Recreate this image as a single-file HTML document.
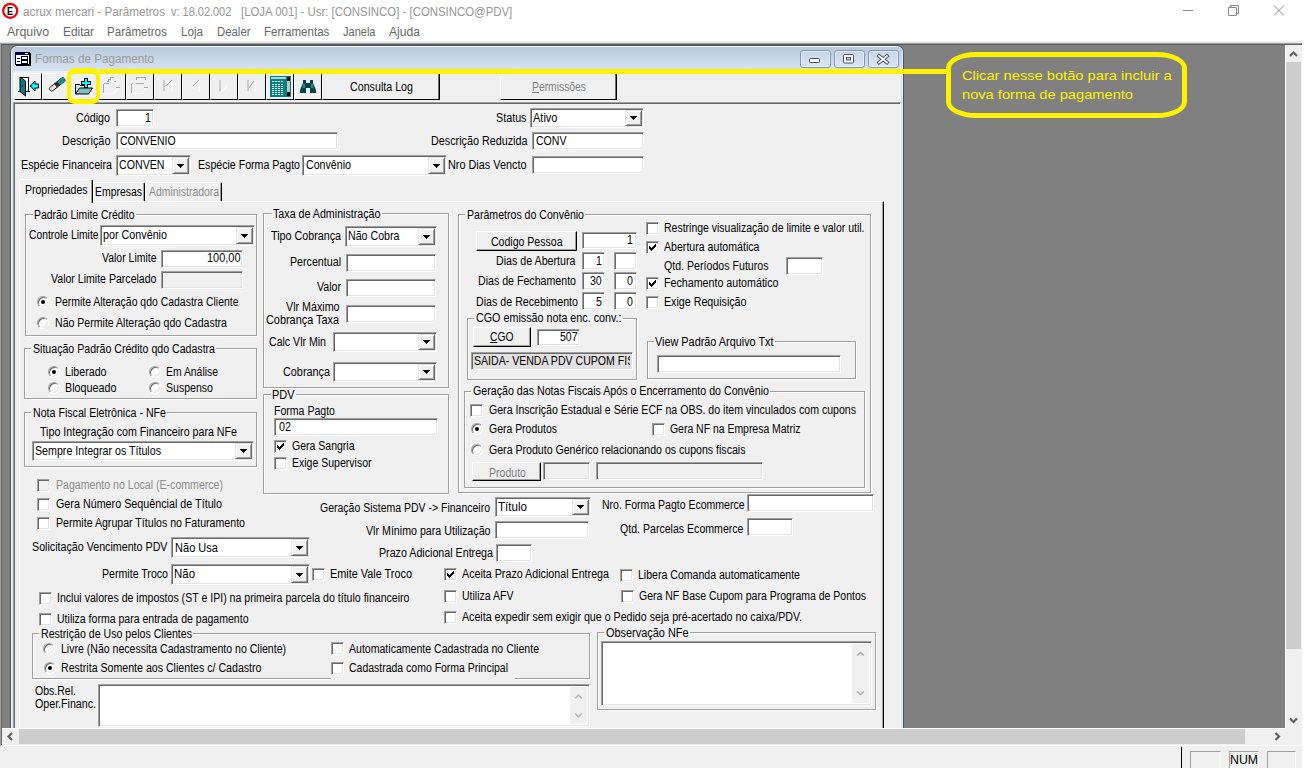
<!DOCTYPE html>
<html lang="pt-BR"><head><meta charset="utf-8"><title>acrux mercari - Parâmetros</title>
<style>

*{box-sizing:border-box}
html,body{margin:0;padding:0}
body{width:1304px;height:771px;position:relative;overflow:hidden;background:#fff;font-family:"Liberation Sans",sans-serif;font-size:12px;color:#000}
body div,body span.t,body svg.abs{position:absolute}
.t{white-space:nowrap;transform-origin:0 0;display:block}
.ed{background:#fff;border:1px solid;border-color:#a0a0a0 #fff #fff #a0a0a0;box-shadow:inset 1px 1px 0 #696969,inset -1px -1px 0 #e3e3e3}
.dd{right:1px;top:1px;bottom:1px;width:17px;background:#f0f0f0;border:1px solid;border-color:#e3e3e3 #696969 #696969 #e3e3e3;box-shadow:inset 1px 1px 0 #fff,inset -1px -1px 0 #a0a0a0}
.dd i{position:absolute;left:4px;top:50%;margin-top:-2px;width:7px;height:4px;background:linear-gradient(#000,#000) 0 0/7px 1px no-repeat,linear-gradient(#000,#000) 1px 1px/5px 1px no-repeat,linear-gradient(#000,#000) 2px 2px/3px 1px no-repeat,linear-gradient(#000,#000) 3px 3px/1px 1px no-repeat}
.cb{background:#fff;border:1px solid;border-color:#a0a0a0 #fff #fff #a0a0a0;box-shadow:inset 1px 1px 0 #696969,inset -1px -1px 0 #e3e3e3}
.cb .ck{position:absolute;left:2px;top:2px}
.rd{background:#fff;border-radius:50%;border:1px solid;border-color:#a0a0a0 #fff #fff #a0a0a0;box-shadow:inset 1px 1px 0 #696969,inset -1px -1px 0 #e3e3e3}
.rd b{position:absolute;left:3px;top:3px;width:4px;height:4px;background:#000;border-radius:50%}
.gb{border:1px solid #a0a0a0;box-shadow:1px 1px 0 #fff,inset 1px 1px 0 #fff}
.bt{background:#f0f0f0;border:1px solid;border-color:#fff #000 #000 #fff;box-shadow:inset -1px -1px 0 #a0a0a0}
.tab{background:#f0f0f0;border:1px solid;border-color:#fff #000 transparent #fff;border-bottom:0;border-radius:2px 2px 0 0;box-shadow:inset -1px 0 0 #a0a0a0}
.tab.sel{}
.tb{top:73px;width:28px;height:27px;background:#f0f0f0;border:1px solid;border-color:#fff #000 #000 #fff}
.tb svg{position:absolute;left:0;top:0}
.tsb{right:2px;top:2px;bottom:2px;width:17px;background:#f0f0f0}
.wb{top:50px;width:31px;height:18px;border:1px solid #8796b8;border-radius:3px;background:linear-gradient(#c6d6ea,#d9e5f3);box-shadow:inset 0 0 0 1px rgba(255,255,255,.45)}
.yl{background:#fff200}

</style></head>
<body>
<svg class="abs" style="left:1px;top:2px" width="18" height="18" viewBox="0 0 18 18"><circle cx="9.200" cy="8.800" r="7" fill="#fff" stroke="#f80008" stroke-width="2.2"/><text x="9.100" y="12.800" text-anchor="middle" font-family="Liberation Sans,sans-serif" font-weight="bold" font-size="11" fill="#000" textLength="6" lengthAdjust="spacingAndGlyphs">E</text></svg><span class="t" style="left:23.00px;top:4.67px;font-size:12.5px;line-height:15px;transform:scaleX(0.9377);color:#969696;">acrux mercari - Parâmetros</span><span class="t" style="left:170.50px;top:4.67px;font-size:12.5px;line-height:15px;transform:scaleX(0.8763);color:#969696;">v: 18.02.002</span><span class="t" style="left:240.50px;top:4.67px;font-size:12.5px;line-height:15px;transform:scaleX(0.9120);color:#969696;">[LOJA 001] - Usr: [CONSINCO] - [CONSINCO@PDV]</span><svg class="abs" style="left:1170px;top:0" width="134" height="24" viewBox="0 0 134 24" fill="none" stroke="#8a8a8a" stroke-width="1"><path d="M13 10.5h10"/><path d="M58.5 7.5h8v8h-8zM60.5 7.5v-2h8v8h-2"/><path d="M104 5.5l10 10M114 5.5l-10 10"/></svg><span class="t" style="left:6.90px;top:25.47px;font-size:12.5px;line-height:15px;transform:scaleX(0.9931);color:#666;">Arquivo</span><span class="t" style="left:62.50px;top:25.47px;font-size:12.5px;line-height:15px;transform:scaleX(0.9493);color:#666;">Editar</span><span class="t" style="left:107.20px;top:25.47px;font-size:12.5px;line-height:15px;transform:scaleX(0.9256);color:#666;">Parâmetros</span><span class="t" style="left:181.00px;top:25.47px;font-size:12.5px;line-height:15px;transform:scaleX(0.9306);color:#666;">Loja</span><span class="t" style="left:217.00px;top:25.47px;font-size:12.5px;line-height:15px;transform:scaleX(0.9096);color:#666;">Dealer</span><span class="t" style="left:264.20px;top:25.47px;font-size:12.5px;line-height:15px;transform:scaleX(0.9215);color:#666;">Ferramentas</span><span class="t" style="left:342.50px;top:25.47px;font-size:12.5px;line-height:15px;transform:scaleX(0.8821);color:#666;">Janela</span><span class="t" style="left:388.80px;top:25.47px;font-size:12.5px;line-height:15px;transform:scaleX(0.9661);color:#666;">Ajuda</span><div style="left:0;top:41px;width:1304px;height:2px;background:linear-gradient(#f6f6f6,#e2e2e2)"></div><div style="left:0;top:43px;width:1304px;height:1px;background:#a0a0a0"></div><div style="left:0;top:44px;width:1304px;height:1px;background:#5c5c5c"></div><div style="left:1px;top:45px;width:1284px;height:683px;background:#808080"></div><div style="left:10px;top:45px;width:894px;height:700px;border:1px solid #4d545e;border-bottom:0;border-radius:7px 7px 0 0;background:#d0dff2;box-shadow:inset 1px 1px 0 #f4f8fc,inset -1px 0 0 #e6eef8"></div><div style="left:12px;top:47px;width:890px;height:24px;border-radius:5px 5px 0 0;background:linear-gradient(#b9c9dc,#c9d7e7 50%,#d3e0f1 90%,#d0e0f6)"></div><svg class="abs" style="left:15px;top:52px" width="16" height="14" viewBox="0 0 16 14" shape-rendering="crispEdges"><rect x="0.5" y="0.5" width="14" height="12" fill="#fff" stroke="#000"/><rect x="1" y="1" width="13" height="2" fill="#000080"/><rect x="10" y="1" width="3" height="1" fill="#fff"/><path d="M2 6.500h3M2 9.500h3" stroke="#000" stroke-width="1"/><rect x="6.500" y="4.500" width="6" height="3" fill="#fff" stroke="#000"/><rect x="6.500" y="8.500" width="6" height="2.500" fill="#fff" stroke="#000"/><path d="M15.500 1v13M1 13.500h15" stroke="#000"/></svg><span class="t" style="left:34.80px;top:52.17px;font-size:12.5px;line-height:15px;transform:scaleX(0.9359);color:#9a9a9a;">Formas de Pagamento</span><div class="wb" style="left:799.5px"></div><div class="wb" style="left:833.5px"></div><div class="wb" style="left:867.5px"></div><svg class="abs" style="left:799px;top:50px" width="100" height="18" viewBox="0 0 100 18"><rect x="10.5" y="8.5" width="10" height="4" rx="1" fill="#fff" stroke="#4a4e5c"/><rect x="44.5" y="4.5" width="10" height="8.5" rx="1" fill="#fff" stroke="#4a4e5c"/><rect x="47.5" y="7.5" width="4" height="2.5" fill="#c9d6e8" stroke="#4a4e5c"/><path d="M80 6l8 6.500M88 6l-8 6.500" stroke="#4a4e5c" stroke-width="3.6" stroke-linecap="square"/><path d="M80 6l8 6.500M88 6l-8 6.500" stroke="#fff" stroke-width="1.7" stroke-linecap="square"/></svg><div style="left:13px;top:71px;width:888px;height:680px;background:#f0f0f0"></div><div class="tb" style="left:14px"><svg width="26" height="25" viewBox="0 0 26 25" shape-rendering="crispEdges"><rect x="5.5" y="3.5" width="8" height="14" fill="#fff" stroke="#000"/><path d="M5 3l5.500 4v15l-5.500-4.500z" fill="#008080" stroke="#000" stroke-width="1" shape-rendering="auto"/><rect x="7" y="11" width="1" height="2" fill="#000"/><path d="M3 17.500h3M13 17.500h2" stroke="#000"/><path d="M15.500 12l4.500-5v3h3.500v4h-3.500v3z" fill="#00ffff" stroke="#000" stroke-width="1" shape-rendering="auto"/><rect x="15" y="11" width="1" height="2" fill="#0000ff"/></svg></div><div class="tb" style="left:42px"><svg width="26" height="25" viewBox="0 0 26 25"><g transform="rotate(-38.500 14.200 10.400)"><rect x="5" y="8.200" width="18.400" height="4.400" rx="2" fill="#fff" stroke="#000" stroke-width="0.900"/><rect x="5.500" y="8.700" width="6" height="3.400" rx="1.500" fill="#dcdcdc"/><rect x="12" y="8.200" width="4.500" height="4.400" fill="#303030"/><rect x="16.500" y="8.200" width="6.500" height="4.400" fill="#109090"/></g><path d="M4 18.500h11" stroke="#fff" stroke-width="1"/></svg></div><div class="tb" style="left:70px"><svg width="26" height="25" viewBox="0 0 26 25" shape-rendering="crispEdges"><path d="M4.500 20v-9l1-1h3l1 1.500h4" fill="none" stroke="#000"/><path d="M5 11h3l1.500 1.500h5v3H7L5 19.500z" fill="#d4ecec"/><path d="M4.500 20h13l4-6h-13z" fill="#80c0c0" stroke="#000" shape-rendering="auto"/><path d="M13.500 4.500h3v3h3v3h-3v3h-3v-3h-3v-3h3z" fill="#00ffff" stroke="#000"/></svg></div><div class="tb" style="left:98px"><svg width="26" height="25" viewBox="0 0 26 25" shape-rendering="crispEdges" fill="none" stroke="#a8a8a8"><g transform="translate(-2.5,-1)"><path d="M6.500 20v-8l2-2h2M10 8.500h2v-2h2v-2h3M17 8.500h2M10 10.500h2M19 14.500h4" /><path d="M6 20.500h11l5-5.500" stroke="#fff" shape-rendering="auto"/></g></svg></div><div class="tb" style="left:126px"><svg width="26" height="25" viewBox="0 0 26 25" shape-rendering="crispEdges" fill="none" stroke="#a8a8a8"><g transform="translate(-2.5,-1)"><path d="M6.500 20v-8l2-2M11.500 7v-3h9v3M11 10.500h8M19 14.500h4"/><path d="M6 20.500h11l5-5.500" stroke="#fff" shape-rendering="auto"/></g></svg></div><div class="tb" style="left:154px"><svg width="26" height="25" viewBox="0 0 26 25" fill="none" stroke="#a8a8a8"><g transform="translate(-1.5,-1)"><path d="M10.500 7v11M18.500 7l-6 6" /><path d="M18.500 8v11" stroke="#fff"/></g></svg></div><div class="tb" style="left:182px"><svg width="26" height="25" viewBox="0 0 26 25" fill="none" stroke="#a8a8a8"><g transform="translate(-1.5,-1)"><path d="M17.500 7l-6 6"/><path d="M17.500 8v11" stroke="#fff"/></g></svg></div><div class="tb" style="left:210px"><svg width="26" height="25" viewBox="0 0 26 25" fill="none" stroke="#a8a8a8"><g transform="translate(-1.5,-1)"><path d="M10.500 7v11"/><path d="M11.500 19l6-6" stroke="#fff"/></g></svg></div><div class="tb" style="left:238px"><svg width="26" height="25" viewBox="0 0 26 25" fill="none" stroke="#a8a8a8"><g transform="translate(-1.5,-1)"><path d="M10.500 7v11M16.500 8l-5 7"/><path d="M17.500 7v11" stroke="#fff"/></g></svg></div><div class="tb" style="left:266px"><svg width="26" height="25" viewBox="0 0 26 25" shape-rendering="crispEdges"><rect x="3" y="2" width="21" height="21" fill="#008080"/><rect x="4" y="3" width="15" height="2" fill="#b0d8d8"/><path d="M5 7.5h12" stroke="#fff" stroke-dasharray="2 1"/><path d="M5 10.5h12" stroke="#fff" stroke-dasharray="2 1"/><path d="M5 12.5h12" stroke="#fff" stroke-dasharray="2 1"/><path d="M5 14.5h12" stroke="#fff" stroke-dasharray="2 1"/><path d="M5 16.5h12" stroke="#fff" stroke-dasharray="2 1"/><path d="M5 18.5h12" stroke="#fff" stroke-dasharray="2 1"/><path d="M5 20.5h12" stroke="#fff" stroke-dasharray="2 1"/><rect x="20" y="3" width="3" height="19" fill="#c0c0c0"/><rect x="20" y="3" width="3" height="4" fill="#000"/><rect x="20" y="18" width="3" height="4" fill="#000"/></svg></div><div class="tb" style="left:294px"><svg width="26" height="25" viewBox="0 0 26 25"><path d="M8 6h3v3h4V6h3v3l3 7v3h-6v-5h-4v5H5v-3l3-7z" fill="#004848"/><path d="M9 10v4M17 10v4" stroke="#7fbfbf" stroke-width="1"/></svg></div><div class="tb" style="left:322px;width:118px;box-shadow:inset -1px 0 0 #707070"></div><span class="t" style="left:349.50px;top:79.84px;font-size:12px;line-height:14px;transform:scaleX(0.8909);">Consulta Log</span><div class="tb" style="left:500px;width:117px;box-shadow:inset -1px 0 0 #707070"></div><span class="t" style="left:531.50px;top:79.84px;font-size:12px;line-height:14px;transform:scaleX(0.8614);color:#808080;"><u>P</u>ermissões</span><div style="left:13px;top:102px;width:888px;height:660px;background:#f0f0f0;border:1px solid;border-color:#a0a0a0 #fff #fff #a0a0a0;box-shadow:inset 1px 1px 0 #696969"></div>
<span class="t" style="left:75.50px;top:110.84px;font-size:12px;line-height:14px;transform:scaleX(0.8940);">Código</span>
<div class="ed" style="left:116px;top:109px;width:38px;height:18px;"></div>
<span class="t" style="left:144.62px;top:110.84px;font-size:12px;line-height:14px;transform:scaleX(0.8800);">1</span>
<span class="t" style="left:62.00px;top:134.34px;font-size:12px;line-height:14px;transform:scaleX(0.9089);">Descrição</span>
<div class="ed" style="left:116px;top:132px;width:222px;height:18px;"></div>
<span class="t" style="left:120.00px;top:133.84px;font-size:12px;line-height:14px;transform:scaleX(0.8670);">CONVENIO</span>
<span class="t" style="left:20.50px;top:158.34px;font-size:12px;line-height:14px;transform:scaleX(0.8916);">Espécie Financeira</span>
<div class="ed" style="left:116px;top:155px;width:75px;height:21px;"><div class="dd"><i></i></div></div>
<span class="t" style="left:119.00px;top:157.84px;font-size:12px;line-height:14px;transform:scaleX(0.8862);">CONVEN</span>
<span class="t" style="left:197.50px;top:157.84px;font-size:12px;line-height:14px;transform:scaleX(0.8840);">Espécie Forma Pagto</span>
<div class="ed" style="left:302px;top:155px;width:145px;height:21px;"><div class="dd"><i></i></div></div>
<span class="t" style="left:305.50px;top:157.84px;font-size:12px;line-height:14px;transform:scaleX(0.8875);">Convênio</span>
<span class="t" style="left:496.00px;top:110.84px;font-size:12px;line-height:14px;transform:scaleX(0.8962);">Status</span>
<div class="ed" style="left:530px;top:108px;width:114px;height:20px;"><div class="dd"><i></i></div></div>
<span class="t" style="left:533.00px;top:110.84px;font-size:12px;line-height:14px;transform:scaleX(0.9180);">Ativo</span>
<span class="t" style="left:431.00px;top:133.84px;font-size:12px;line-height:14px;transform:scaleX(0.8986);">Descrição Reduzida</span>
<div class="ed" style="left:532px;top:132px;width:112px;height:18px;"></div>
<span class="t" style="left:535.50px;top:133.84px;font-size:12px;line-height:14px;transform:scaleX(0.8797);">CONV</span>
<span class="t" style="left:448.00px;top:157.84px;font-size:12px;line-height:14px;transform:scaleX(0.9052);">Nro Dias Vencto</span>
<div class="ed" style="left:532px;top:156px;width:112px;height:18px;"></div>
<div class="" style="left:19px;top:201px;width:865px;height:539px;border-left:1px solid #fff;border-top:1px solid #fff;border-right:1px solid #000;box-shadow:inset -1px 0 0 #a0a0a0;"></div>
<div class="tab" style="left:93px;top:182px;width:52px;height:19px;"></div>
<div class="tab" style="left:145px;top:182px;width:77px;height:19px;"></div>
<div class="tab sel" style="left:19px;top:179px;width:74px;height:24px;"></div>
<span class="t" style="left:25.00px;top:182.84px;font-size:12px;line-height:14px;transform:scaleX(0.8755);">Propriedades</span>
<span class="t" style="left:94.50px;top:184.84px;font-size:12px;line-height:14px;transform:scaleX(0.8699);">Empresas</span>
<span class="t" style="left:148.50px;top:184.84px;font-size:12px;line-height:14px;transform:scaleX(0.8674);color:#8c8c8c;">Administradora</span>
<div class="gb" style="left:25px;top:214px;width:232px;height:122px;"></div>
<div class="" style="left:32.5px;top:211px;width:103.5px;height:8px;background:#f0f0f0;"></div>
<span class="t" style="left:34.00px;top:207.84px;font-size:12px;line-height:14px;transform:scaleX(0.8659);">Padrão Limite Crédito</span>
<span class="t" style="left:29.00px;top:228.34px;font-size:12px;line-height:14px;transform:scaleX(0.8612);">Controle Limite</span>
<div class="ed" style="left:100px;top:225px;width:155px;height:21px;"><div class="dd"><i></i></div></div>
<span class="t" style="left:102.50px;top:227.84px;font-size:12px;line-height:14px;transform:scaleX(0.8965);">por Convênio</span>
<span class="t" style="left:101.50px;top:251.34px;font-size:12px;line-height:14px;transform:scaleX(0.8724);">Valor Limite</span>
<div class="ed" style="left:161px;top:250px;width:82px;height:18px;"></div>
<span class="t" style="left:207.00px;top:251.34px;font-size:12px;line-height:14px;transform:scaleX(0.9127);">100,00</span>
<span class="t" style="left:50.50px;top:271.84px;font-size:12px;line-height:14px;transform:scaleX(0.8803);">Valor Limite Parcelado</span>
<div class="ed" style="left:161px;top:271px;width:82px;height:18px;background:#f0f0f0;"></div>
<div class="rd" style="left:37px;top:296px;width:12px;height:12px;"><b></b></div>
<span class="t" style="left:54.50px;top:294.84px;font-size:12px;line-height:14px;transform:scaleX(0.8706);">Permite Alteração qdo Cadastra Cliente</span>
<div class="rd" style="left:37px;top:317px;width:12px;height:12px;"></div>
<span class="t" style="left:54.50px;top:315.84px;font-size:12px;line-height:14px;transform:scaleX(0.8800);">Não Permite Alteração qdo Cadastra</span>
<div class="gb" style="left:24px;top:348px;width:233px;height:51px;"></div>
<div class="" style="left:31px;top:345px;width:185px;height:8px;background:#f0f0f0;"></div>
<span class="t" style="left:32.50px;top:341.84px;font-size:12px;line-height:14px;transform:scaleX(0.8829);">Situação Padrão Crédito qdo Cadastra</span>
<div class="rd" style="left:48px;top:366px;width:12px;height:12px;"><b></b></div>
<span class="t" style="left:65.00px;top:364.84px;font-size:12px;line-height:14px;transform:scaleX(0.8883);">Liberado</span>
<div class="rd" style="left:149px;top:366px;width:12px;height:12px;"></div>
<span class="t" style="left:166.00px;top:364.84px;font-size:12px;line-height:14px;transform:scaleX(0.8662);">Em Análise</span>
<div class="rd" style="left:48px;top:382px;width:12px;height:12px;"></div>
<span class="t" style="left:65.00px;top:380.84px;font-size:12px;line-height:14px;transform:scaleX(0.8974);">Bloqueado</span>
<div class="rd" style="left:149px;top:382px;width:12px;height:12px;"></div>
<span class="t" style="left:166.00px;top:380.84px;font-size:12px;line-height:14px;transform:scaleX(0.8806);">Suspenso</span>
<div class="gb" style="left:24px;top:412px;width:233px;height:55px;"></div>
<div class="" style="left:31px;top:409px;width:136px;height:8px;background:#f0f0f0;"></div>
<span class="t" style="left:32.50px;top:406.14px;font-size:12px;line-height:14px;transform:scaleX(0.8864);">Nota Fiscal Eletrônica - NFe</span>
<span class="t" style="left:39.50px;top:425.34px;font-size:12px;line-height:14px;transform:scaleX(0.8887);">Tipo Integração com Financeiro para NFe</span>
<div class="ed" style="left:32px;top:441px;width:222px;height:20px;"><div class="dd"><i></i></div></div>
<span class="t" style="left:34.50px;top:444.34px;font-size:12px;line-height:14px;transform:scaleX(0.8883);">Sempre Integrar os Títulos</span>
<div class="gb" style="left:263px;top:213px;width:186px;height:175px;"></div>
<div class="" style="left:271.5px;top:210px;width:110.5px;height:8px;background:#f0f0f0;"></div>
<span class="t" style="left:273.00px;top:206.84px;font-size:12px;line-height:14px;transform:scaleX(0.8904);">Taxa de Administração</span>
<span class="t" style="left:270.50px;top:228.84px;font-size:12px;line-height:14px;transform:scaleX(0.8944);">Tipo Cobrança</span>
<div class="ed" style="left:345px;top:226px;width:92px;height:21px;"><div class="dd"><i></i></div></div>
<span class="t" style="left:348.00px;top:228.84px;font-size:12px;line-height:14px;transform:scaleX(0.8875);">Não Cobra</span>
<span class="t" style="left:289.50px;top:255.34px;font-size:12px;line-height:14px;transform:scaleX(0.8889);">Percentual</span>
<div class="ed" style="left:346px;top:254px;width:90px;height:18px;"></div>
<span class="t" style="left:316.50px;top:280.34px;font-size:12px;line-height:14px;transform:scaleX(0.8848);">Valor</span>
<div class="ed" style="left:346px;top:279px;width:90px;height:18px;"></div>
<span class="t" style="left:285.50px;top:299.84px;font-size:12px;line-height:14px;transform:scaleX(0.8914);">Vlr Máximo</span>
<span class="t" style="left:266.00px;top:312.84px;font-size:12px;line-height:14px;transform:scaleX(0.9068);">Cobrança Taxa</span>
<div class="ed" style="left:346px;top:305px;width:90px;height:18px;"></div>
<span class="t" style="left:268.50px;top:335.14px;font-size:12px;line-height:14px;transform:scaleX(0.8812);">Calc Vlr Min</span>
<div class="ed" style="left:333px;top:332px;width:104px;height:20px;"><div class="dd"><i></i></div></div>
<span class="t" style="left:282.50px;top:364.84px;font-size:12px;line-height:14px;transform:scaleX(0.9033);">Cobrança</span>
<div class="ed" style="left:333px;top:362px;width:104px;height:20px;"><div class="dd"><i></i></div></div>
<div class="gb" style="left:263px;top:394px;width:186px;height:100px;"></div>
<div class="" style="left:270.5px;top:391px;width:25.5px;height:8px;background:#f0f0f0;"></div>
<span class="t" style="left:272.00px;top:388.14px;font-size:12px;line-height:14px;transform:scaleX(0.9114);">PDV</span>
<span class="t" style="left:273.50px;top:403.84px;font-size:12px;line-height:14px;transform:scaleX(0.8793);">Forma Pagto</span>
<div class="ed" style="left:274px;top:418px;width:164px;height:18px;"></div>
<span class="t" style="left:279.00px;top:419.84px;font-size:12px;line-height:14px;transform:scaleX(0.8982);">02</span>
<div class="cb" style="left:274px;top:440px;width:13px;height:13px;"><svg class="ck" width="7" height="7" viewBox="0 0 7 7" shape-rendering="crispEdges"><path d="M0 2h1v1h1v1h1v-1h1v-1h1v-1h1v-1h1v3h-1v1h-1v1h-1v1h-1v1h-1v-1h-1v-1h-1z" fill="#000"/></svg></div>
<span class="t" style="left:292.00px;top:438.84px;font-size:12px;line-height:14px;transform:scaleX(0.8757);">Gera Sangria</span>
<div class="cb" style="left:274px;top:457px;width:13px;height:13px;"></div>
<span class="t" style="left:292.00px;top:455.84px;font-size:12px;line-height:14px;transform:scaleX(0.8763);">Exige Supervisor</span>
<div class="gb" style="left:458px;top:214px;width:413px;height:279px;"></div>
<div class="" style="left:465px;top:211px;width:120px;height:8px;background:#f0f0f0;"></div>
<span class="t" style="left:466.50px;top:207.84px;font-size:12px;line-height:14px;transform:scaleX(0.8814);">Parâmetros do Convênio</span>
<div class="bt" style="left:476px;top:231px;width:101px;height:20px;"></div>
<span class="t" style="left:491.00px;top:235.34px;font-size:12px;line-height:14px;transform:scaleX(0.8785);">Codigo Pessoa</span>
<div class="ed" style="left:582px;top:232px;width:55px;height:17px;"></div>
<span class="t" style="left:627.12px;top:232.54px;font-size:12px;line-height:14px;transform:scaleX(0.8800);">1</span>
<span class="t" style="left:496.00px;top:254.44px;font-size:12px;line-height:14px;transform:scaleX(0.8894);">Dias de Abertura</span>
<div class="ed" style="left:582px;top:252px;width:23px;height:18px;"></div>
<span class="t" style="left:596.12px;top:253.84px;font-size:12px;line-height:14px;transform:scaleX(0.8800);">1</span>
<div class="ed" style="left:614px;top:252px;width:23px;height:18px;"></div>
<span class="t" style="left:478.00px;top:274.44px;font-size:12px;line-height:14px;transform:scaleX(0.8850);">Dias de Fechamento</span>
<div class="ed" style="left:582px;top:272px;width:23px;height:18px;"></div>
<span class="t" style="left:590.24px;top:274.34px;font-size:12px;line-height:14px;transform:scaleX(0.8800);">30</span>
<div class="ed" style="left:614px;top:272px;width:23px;height:18px;"></div>
<span class="t" style="left:627.12px;top:274.34px;font-size:12px;line-height:14px;transform:scaleX(0.8800);">0</span>
<span class="t" style="left:475.50px;top:294.64px;font-size:12px;line-height:14px;transform:scaleX(0.8890);">Dias de Recebimento</span>
<div class="ed" style="left:582px;top:292px;width:23px;height:18px;"></div>
<span class="t" style="left:596.12px;top:294.64px;font-size:12px;line-height:14px;transform:scaleX(0.8800);">5</span>
<div class="ed" style="left:614px;top:292px;width:23px;height:18px;"></div>
<span class="t" style="left:627.12px;top:294.64px;font-size:12px;line-height:14px;transform:scaleX(0.8800);">0</span>
<div class="cb" style="left:646px;top:222px;width:13px;height:13px;"></div>
<span class="t" style="left:664.00px;top:220.84px;font-size:12px;line-height:14px;transform:scaleX(0.8739);">Restringe visualização de limite e valor util.</span>
<div class="cb" style="left:646px;top:241px;width:13px;height:13px;"><svg class="ck" width="7" height="7" viewBox="0 0 7 7" shape-rendering="crispEdges"><path d="M0 2h1v1h1v1h1v-1h1v-1h1v-1h1v-1h1v3h-1v1h-1v1h-1v1h-1v1h-1v-1h-1v-1h-1z" fill="#000"/></svg></div>
<span class="t" style="left:664.00px;top:239.84px;font-size:12px;line-height:14px;transform:scaleX(0.8837);">Abertura automática</span>
<span class="t" style="left:664.00px;top:258.84px;font-size:12px;line-height:14px;transform:scaleX(0.8851);">Qtd. Períodos Futuros</span>
<div class="ed" style="left:786px;top:257px;width:37px;height:18px;"></div>
<div class="cb" style="left:646px;top:277px;width:13px;height:13px;"><svg class="ck" width="7" height="7" viewBox="0 0 7 7" shape-rendering="crispEdges"><path d="M0 2h1v1h1v1h1v-1h1v-1h1v-1h1v-1h1v3h-1v1h-1v1h-1v1h-1v1h-1v-1h-1v-1h-1z" fill="#000"/></svg></div>
<span class="t" style="left:664.00px;top:275.84px;font-size:12px;line-height:14px;transform:scaleX(0.8893);">Fechamento automático</span>
<div class="cb" style="left:646px;top:296px;width:13px;height:13px;"></div>
<span class="t" style="left:664.00px;top:294.84px;font-size:12px;line-height:14px;transform:scaleX(0.8898);">Exige Requisição</span>
<div class="gb" style="left:467px;top:318px;width:170px;height:62px;"></div>
<div class="" style="left:474px;top:315px;width:148.5px;height:8px;background:#f0f0f0;"></div>
<span class="t" style="left:475.50px;top:311.44px;font-size:12px;line-height:14px;transform:scaleX(0.8953);">CGO emissão nota enc. conv.:</span>
<div class="bt" style="left:473px;top:327px;width:58px;height:20px;"></div>
<span class="t" style="left:489.50px;top:330.34px;font-size:12px;line-height:14px;transform:scaleX(0.8594);"><u>C</u>GO</span>
<div class="ed" style="left:537px;top:329px;width:43px;height:17px;"></div>
<span class="t" style="left:559.87px;top:329.84px;font-size:12px;line-height:14px;transform:scaleX(0.8800);">507</span>
<div class="ed" style="left:471px;top:352px;width:162px;height:18px;background:#e1e1e1;overflow:hidden;"></div>
<div style="left:474.00px;top:353.84px;width:156.00px;height:14px;overflow:hidden"><span class="t" style="left:0;top:0;font-size:12px;line-height:14px;transform:scaleX(0.8800);">SAIDA- VENDA PDV CUPOM FISCAL</span></div>
<div class="gb" style="left:647px;top:341px;width:209px;height:38px;"></div>
<div class="" style="left:653.5px;top:338px;width:121.5px;height:8px;background:#f0f0f0;"></div>
<span class="t" style="left:655.00px;top:334.84px;font-size:12px;line-height:14px;transform:scaleX(0.9048);">View Padrão Arquivo Txt</span>
<div class="ed" style="left:657px;top:355px;width:184px;height:18px;"></div>
<div class="gb" style="left:464px;top:391px;width:401px;height:97px;"></div>
<div class="" style="left:471px;top:388px;width:299px;height:8px;background:#f0f0f0;"></div>
<span class="t" style="left:472.50px;top:384.14px;font-size:12px;line-height:14px;transform:scaleX(0.8875);">Geração das Notas Fiscais Após o Encerramento do Convênio</span>
<div class="cb" style="left:470px;top:404px;width:13px;height:13px;"></div>
<span class="t" style="left:488.50px;top:403.34px;font-size:12px;line-height:14px;transform:scaleX(0.8818);">Gera Inscrição Estadual e Série ECF na OBS. do item vinculados com cupons</span>
<div class="rd" style="left:471px;top:423px;width:12px;height:12px;"><b></b></div>
<span class="t" style="left:488.50px;top:422.04px;font-size:12px;line-height:14px;transform:scaleX(0.8713);">Gera Produtos</span>
<div class="cb" style="left:652px;top:423px;width:13px;height:13px;"></div>
<span class="t" style="left:670.00px;top:422.04px;font-size:12px;line-height:14px;transform:scaleX(0.8697);">Gera NF na Empresa Matriz</span>
<div class="rd" style="left:471px;top:444px;width:12px;height:12px;"></div>
<span class="t" style="left:488.50px;top:442.54px;font-size:12px;line-height:14px;transform:scaleX(0.8819);">Gera Produto Genérico relacionando os cupons fiscais</span>
<div class="bt" style="left:472px;top:462px;width:69px;height:19px;"></div>
<span class="t" style="left:488.50px;top:465.84px;font-size:12px;line-height:14px;transform:scaleX(0.8803);color:#808080;">Produto</span>
<div class="ed" style="left:543px;top:462px;width:47px;height:18px;background:#f0f0f0;"></div>
<div class="ed" style="left:596px;top:462px;width:167px;height:18px;background:#f0f0f0;"></div>
<div class="cb" style="left:37px;top:479px;width:13px;height:13px;background:#f0f0f0;"></div>
<span class="t" style="left:55.50px;top:477.84px;font-size:12px;line-height:14px;transform:scaleX(0.8816);color:#8c8c8c;">Pagamento no Local (E-commerce)</span>
<div class="cb" style="left:37px;top:498px;width:13px;height:13px;"></div>
<span class="t" style="left:55.50px;top:497.04px;font-size:12px;line-height:14px;transform:scaleX(0.8962);">Gera Número Sequêncial de Título</span>
<div class="cb" style="left:37px;top:517px;width:13px;height:13px;"></div>
<span class="t" style="left:55.50px;top:515.84px;font-size:12px;line-height:14px;transform:scaleX(0.8836);">Permite Agrupar Títulos no Faturamento</span>
<span class="t" style="left:32.00px;top:539.84px;font-size:12px;line-height:14px;transform:scaleX(0.8909);">Solicitação Vencimento PDV</span>
<div class="ed" style="left:171px;top:537px;width:139px;height:21px;"><div class="dd"><i></i></div></div>
<span class="t" style="left:174.50px;top:540.84px;font-size:12px;line-height:14px;transform:scaleX(0.9210);">Não Usa</span>
<span class="t" style="left:102.00px;top:567.04px;font-size:12px;line-height:14px;transform:scaleX(0.8835);">Permite Troco</span>
<div class="ed" style="left:171px;top:564px;width:139px;height:21px;"><div class="dd"><i></i></div></div>
<span class="t" style="left:173.50px;top:566.84px;font-size:12px;line-height:14px;transform:scaleX(0.9539);">Não</span>
<div class="cb" style="left:312px;top:568px;width:13px;height:13px;"></div>
<span class="t" style="left:329.50px;top:566.84px;font-size:12px;line-height:14px;transform:scaleX(0.9062);">Emite Vale Troco</span>
<div class="cb" style="left:39px;top:592px;width:13px;height:13px;"></div>
<span class="t" style="left:57.00px;top:590.84px;font-size:12px;line-height:14px;transform:scaleX(0.8813);">Inclui valores de impostos (ST e IPI) na primeira parcela do título financeiro</span>
<div class="cb" style="left:39px;top:613px;width:13px;height:13px;"></div>
<span class="t" style="left:57.00px;top:612.34px;font-size:12px;line-height:14px;transform:scaleX(0.8779);">Utiliza forma para entrada de pagamento</span>
<span class="t" style="left:320.00px;top:500.54px;font-size:12px;line-height:14px;transform:scaleX(0.8744);">Geração Sistema PDV -&gt; Financeiro</span>
<div class="ed" style="left:495px;top:497px;width:96px;height:20px;"><div class="dd"><i></i></div></div>
<span class="t" style="left:497.50px;top:499.84px;font-size:12px;line-height:14px;transform:scaleX(0.9662);">Título</span>
<span class="t" style="left:365.50px;top:523.84px;font-size:12px;line-height:14px;transform:scaleX(0.8890);">Vlr Mínimo para Utilização</span>
<div class="ed" style="left:495px;top:521px;width:94px;height:18px;"></div>
<span class="t" style="left:378.50px;top:545.84px;font-size:12px;line-height:14px;transform:scaleX(0.8900);">Prazo Adicional Entrega</span>
<div class="ed" style="left:496px;top:544px;width:36px;height:18px;"></div>
<span class="t" style="left:602.00px;top:497.64px;font-size:12px;line-height:14px;transform:scaleX(0.8757);">Nro. Forma Pagto Ecommerce</span>
<div class="ed" style="left:747px;top:494px;width:127px;height:18px;"></div>
<span class="t" style="left:620.00px;top:521.64px;font-size:12px;line-height:14px;transform:scaleX(0.8818);">Qtd. Parcelas Ecommerce</span>
<div class="ed" style="left:747px;top:518px;width:46px;height:18px;"></div>
<div class="cb" style="left:444px;top:568px;width:13px;height:13px;"><svg class="ck" width="7" height="7" viewBox="0 0 7 7" shape-rendering="crispEdges"><path d="M0 2h1v1h1v1h1v-1h1v-1h1v-1h1v-1h1v3h-1v1h-1v1h-1v1h-1v1h-1v-1h-1v-1h-1z" fill="#000"/></svg></div>
<span class="t" style="left:461.50px;top:566.84px;font-size:12px;line-height:14px;transform:scaleX(0.8922);">Aceita Prazo Adicional Entrega</span>
<div class="cb" style="left:620px;top:569px;width:13px;height:13px;"></div>
<span class="t" style="left:637.50px;top:567.84px;font-size:12px;line-height:14px;transform:scaleX(0.8799);">Libera Comanda automaticamente</span>
<div class="cb" style="left:444px;top:590px;width:13px;height:13px;"></div>
<span class="t" style="left:461.50px;top:588.84px;font-size:12px;line-height:14px;transform:scaleX(0.8775);">Utiliza AFV</span>
<div class="cb" style="left:621px;top:590px;width:13px;height:13px;"></div>
<span class="t" style="left:638.50px;top:588.84px;font-size:12px;line-height:14px;transform:scaleX(0.8749);">Gera NF Base Cupom para Programa de Pontos</span>
<div class="cb" style="left:444px;top:611px;width:13px;height:13px;"></div>
<span class="t" style="left:461.50px;top:610.34px;font-size:12px;line-height:14px;transform:scaleX(0.8875);">Aceita expedir sem exigir que o Pedido seja pré-acertado no caixa/PDV.</span>
<div class="gb" style="left:32px;top:633px;width:558px;height:46px;"></div>
<div class="" style="left:331px;top:677px;width:184px;height:5px;background:#f0f0f0;"></div>
<div class="" style="left:39px;top:630px;width:154px;height:8px;background:#f0f0f0;"></div>
<span class="t" style="left:40.50px;top:626.84px;font-size:12px;line-height:14px;transform:scaleX(0.8843);">Restrição de Uso pelos Clientes</span>
<div class="rd" style="left:43px;top:643px;width:12px;height:12px;"></div>
<span class="t" style="left:60.50px;top:642.04px;font-size:12px;line-height:14px;transform:scaleX(0.8785);">Livre (Não necessita Cadastramento no Cliente)</span>
<div class="rd" style="left:44px;top:662px;width:12px;height:12px;"><b></b></div>
<span class="t" style="left:61.00px;top:660.84px;font-size:12px;line-height:14px;transform:scaleX(0.8841);">Restrita Somente aos Clientes c/ Cadastro</span>
<div class="cb" style="left:331px;top:642px;width:13px;height:13px;"></div>
<span class="t" style="left:348.50px;top:642.34px;font-size:12px;line-height:14px;transform:scaleX(0.8791);">Automaticamente Cadastrada no Cliente</span>
<div class="cb" style="left:331px;top:662px;width:13px;height:13px;"></div>
<span class="t" style="left:348.50px;top:661.34px;font-size:12px;line-height:14px;transform:scaleX(0.8733);">Cadastrada como Forma Principal</span>
<span class="t" style="left:35.00px;top:683.84px;font-size:12px;line-height:14px;transform:scaleX(0.8782);">Obs.Rel.</span>
<span class="t" style="left:35.00px;top:697.34px;font-size:12px;line-height:14px;transform:scaleX(0.8879);">Oper.Financ.</span>
<div class="ed" style="left:98px;top:684px;width:492px;height:43px;"><div class="tsb"><svg width="17" height="100%" viewBox="0 0 17 39"><path d="M5 12l3.5-3.5 3.5 3.5M5 28l3.5 3.5 3.5-3.5" fill="none" stroke="#b4b4b4" stroke-width="1.6"/></svg></div></div>
<div class="gb" style="left:597px;top:632px;width:279px;height:78px;"></div>
<div class="" style="left:604px;top:629px;width:85.5px;height:8px;background:#f0f0f0;"></div>
<span class="t" style="left:605.50px;top:625.84px;font-size:12px;line-height:14px;transform:scaleX(0.9096);">Observação NFe</span>
<div class="ed" style="left:601px;top:641px;width:271px;height:65px;"><div class="tsb"><svg width="17" height="100%" viewBox="0 0 17 61"><path d="M5 12l3.5-3.5 3.5 3.5M5 49l3.5 3.5 3.5-3.5" fill="none" stroke="#b4b4b4" stroke-width="1.6"/></svg></div></div>
<div style="left:0;top:728px;width:1304px;height:18px;background:#f0f0f0"></div><div style="left:19px;top:729px;width:1226px;height:15px;background:#cdcdcd"></div><svg class="abs" style="left:0;top:728px" width="1304" height="17" viewBox="0 0 1304 17" fill="none" stroke="#606060" stroke-width="2.2"><path d="M12 5l-3.500 3.500 3.500 3.500M1275.500 5l3.500 3.500-3.500 3.500"/></svg><div style="left:1285px;top:45px;width:17px;height:683px;background:#f0f0f0"></div><div style="left:1286px;top:62px;width:15px;height:587px;background:#cdcdcd"></div><svg class="abs" style="left:1285px;top:45px" width="17" height="683" viewBox="0 0 17 683" fill="none" stroke="#606060" stroke-width="2.2"><path d="M5 11l3.500-3.500 3.500 3.500M5 673.500l3.500 3.500 3.500-3.500"/></svg><div style="left:0;top:746px;width:1304px;height:22px;background:#f0f0f0"></div><div style="left:0;top:768px;width:1304px;height:3px;background:#fff"></div><div style="left:1180.800px;top:747px;width:1.500px;height:21px;background:#000"></div><div style="left:1190px;top:751px;width:31px;height:17px;border:1px solid;border-color:#a0a0a0 #fff #fff #a0a0a0;border-bottom:0"></div><div style="left:1229px;top:751px;width:30px;height:17px;border:1px solid;border-color:#a0a0a0 #fff #fff #a0a0a0;border-bottom:0"></div><div style="left:1267px;top:751px;width:29px;height:17px;border:1px solid;border-color:#a0a0a0 #fff #fff #a0a0a0;border-bottom:0"></div><span class="t" style="left:1230.20px;top:752.77px;font-size:12.5px;line-height:15px;transform:scaleX(0.9835);">NUM</span><div style="left:0;top:44px;width:1px;height:702px;background:#a0a0a0"></div><div style="left:1px;top:45px;width:1px;height:700px;background:#696969"></div><div style="left:2px;top:745px;width:1301px;height:1px;background:#fff"></div><div style="left:2px;top:728px;width:1283px;height:1px;background:#fff"></div><div style="left:1285px;top:45px;width:1px;height:684px;background:#fff"></div><div style="left:1302px;top:0;width:2px;height:771px;background:#fff"></div><div class="yl" style="left:99px;top:69px;width:850px;height:5px"></div><div style="left:66.500px;top:67.500px;width:33.500px;height:36px;border:solid #fff200;border-width:6px 4.800px 5px 4.800px;border-radius:8px"></div><div style="left:945.500px;top:52.400px;width:241px;height:66px;border:5px solid #fff200;border-radius:30px/16px"></div><span class="t" style="left:961.50px;top:67.52px;font-size:13.5px;line-height:16px;transform:scaleX(1.0868);color:#fff200;">Clicar nesse botão para incluir a</span><span class="t" style="left:961.50px;top:87.12px;font-size:13.5px;line-height:16px;transform:scaleX(1.0850);color:#fff200;">nova forma de pagamento</span>
</body></html>
